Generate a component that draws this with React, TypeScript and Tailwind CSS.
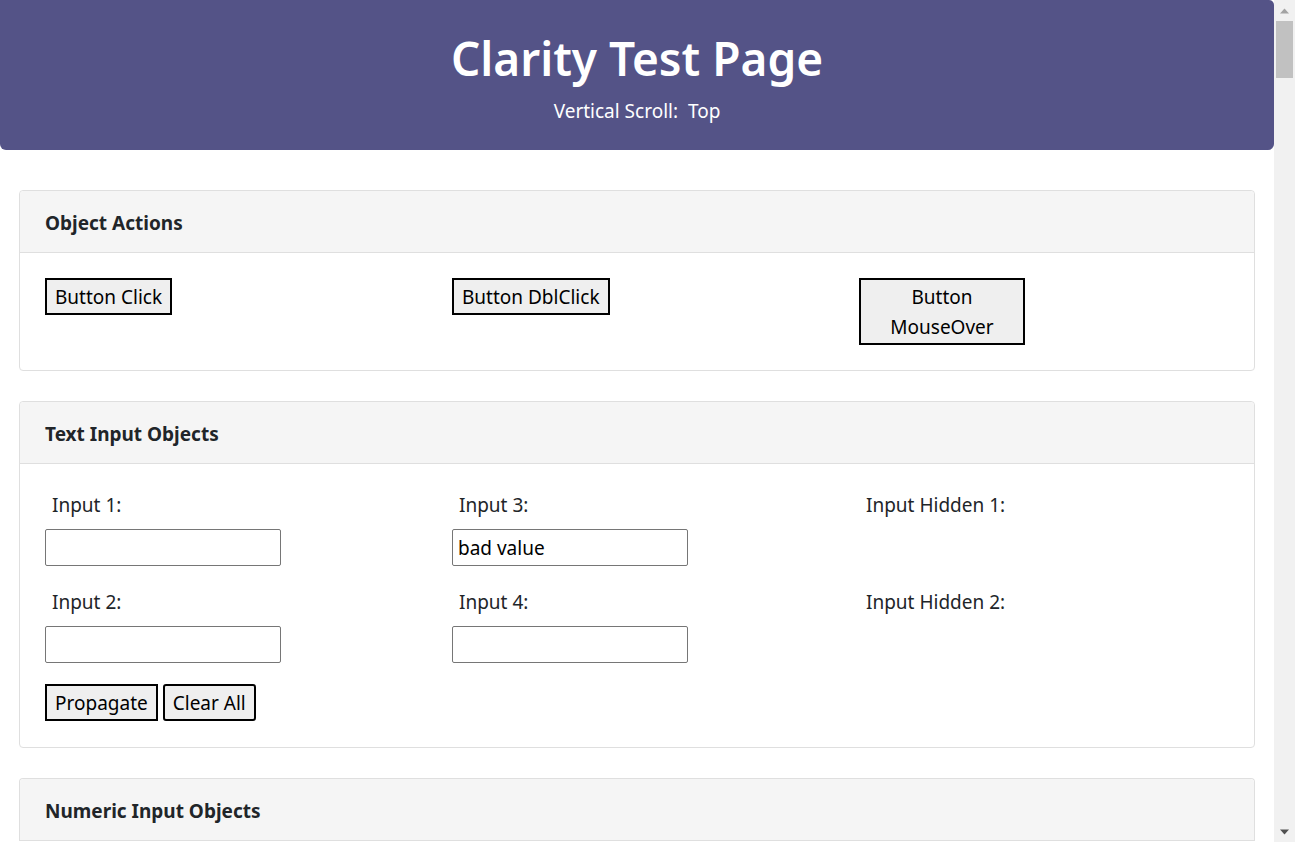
import React from "react";

const font = { fontFamily: '"Noto Sans", "Open Sans", sans-serif' };

function CardHeader({ title }: { title: string }) {
  return (
    <div className="h-[62px] flex items-center px-[25px] pt-[3px] bg-[#f5f5f5] border-b border-[#dfdfdf] rounded-t-[4px] text-[19px] font-bold text-[#212529]">
      {title}
    </div>
  );
}

function Card({ title, children }: { title: string; children?: React.ReactNode }) {
  return (
    <div className="mx-[19px] mb-[30px] rounded-[4px] border border-[#dfdfdf] bg-white">
      <CardHeader title={title} />
      {children}
    </div>
  );
}

function Btn({ children, className = "" }: { children: React.ReactNode; className?: string }) {
  return (
    <button className={`border-2 border-black bg-[#efefef] px-[8px] py-[1.5px] text-[19px] leading-[30px] text-black ${className}`}>
      {children}
    </button>
  );
}

function Field({ label, value }: { label: string; value?: string }) {
  return (
    <div className="flex flex-col">
      <div className="pl-[7px] leading-[30px] text-[19px] text-[#212529]">{label}</div>
      <input
        readOnly
        value={value ?? ""}
        className="mt-[9px] w-[236px] h-[37px] border border-[#767676] rounded-[2px] px-[5px] text-[19px] text-black outline-none"
        style={font}
      />
    </div>
  );
}

function Scrollbar() {
  return (
    <div className="w-[21px] h-[842px] shrink-0 bg-[#f1f1f1] flex flex-col items-center">
      <div className="h-[21px] w-full flex items-center justify-center">
        <svg width="9" height="6" viewBox="0 0 9 6"><path d="M0 5.5 L4.5 0.5 L9 5.5 Z" fill="#a3a3a3" /></svg>
      </div>
      <div className="w-[17px] h-[57px] bg-[#c1c1c1]" />
      <div className="flex-1" />
      <div className="h-[21px] w-full flex items-center justify-center">
        <svg width="9" height="6" viewBox="0 0 9 6"><path d="M0 0.5 L4.5 5.5 L9 0.5 Z" fill="#505050" /></svg>
      </div>
    </div>
  );
}

export default function App() {
  return (
    <div style={font} className="h-[842px] overflow-hidden flex bg-white text-[#212529]">
      <div className="flex-1 min-w-0 overflow-hidden">
        <div className="w-full h-[150px] bg-[#545387] rounded-b-[6px] rounded-tr-[5px] flex flex-col items-center text-white">
          <div className="mt-[28px] text-[46px] leading-[60px] font-semibold">Clarity Test Page</div>
          <div className="mt-[8px] text-[19px] leading-[30px]">Vertical Scroll:&nbsp; Top</div>
        </div>
        <div className="h-[40px]" />
        <Card title="Object Actions">
          <div className="grid grid-cols-[407px_407px_1fr] px-[25px] pt-[25px] pb-[25px] items-start">
            <div><Btn>Button Click</Btn></div>
            <div><Btn>Button DblClick</Btn></div>
            <div><Btn className="w-[166px]">Button MouseOver</Btn></div>
          </div>
        </Card>
        <Card title="Text Input Objects">
          <div className="px-[25px] pt-[26px] pb-[26px]">
            <div className="grid grid-cols-[407px_407px_1fr] gap-y-[21px]">
              <Field label="Input 1:" />
              <Field label="Input 3:" value="bad value" />
              <div className="pl-[7px] leading-[30px] text-[19px]">Input Hidden 1:</div>
              <Field label="Input 2:" />
              <Field label="Input 4:" />
              <div className="pl-[7px] leading-[30px] text-[19px]">Input Hidden 2:</div>
            </div>
            <div className="mt-[21px] flex gap-[5px]">
              <Btn>Propagate</Btn>
              <Btn className="rounded-[3px]">Clear All</Btn>
            </div>
          </div>
        </Card>
        <div className="mx-[19px] rounded-t-[4px] border border-[#dfdfdf] border-b-0 bg-white">
          <CardHeader title="Numeric Input Objects" />
        </div>
      </div>
      <Scrollbar />
    </div>
  );
}
